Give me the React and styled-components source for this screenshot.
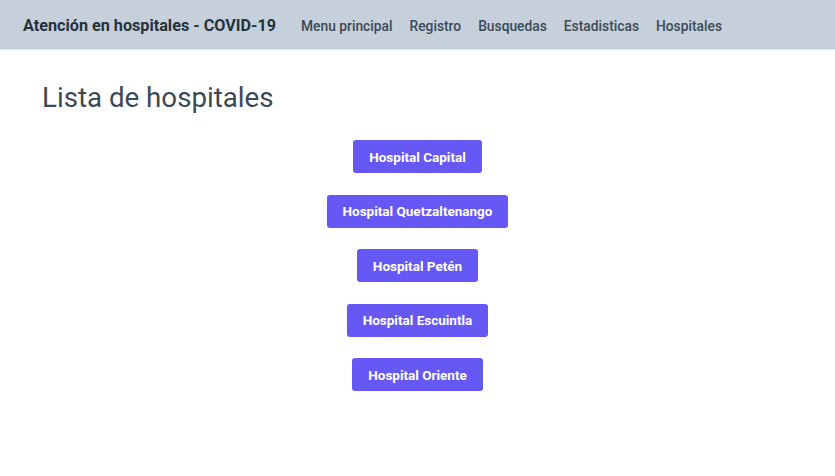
import React from 'react';
import styled, { createGlobalStyle } from 'styled-components';

const GlobalStyle = createGlobalStyle`
  body {
    margin: 0;
    background: #ffffff;
    font-family: Roboto, "Liberation Sans", sans-serif;
  }
`;

const hospitales = [
  'Hospital Capital',
  'Hospital Quetzaltenango',
  'Hospital Petén',
  'Hospital Escuintla',
  'Hospital Oriente',
];

const links = ['Menu principal', 'Registro', 'Busquedas', 'Estadisticas', 'Hospitales'];

const Navbar = styled.nav`
  height: 50px;
  background: #c5d0da;
  border-bottom: 1px solid #e6eaee;
  display: flex;
  align-items: center;
  padding: 2px 23px 0;
  box-sizing: border-box;
`;

const Brand = styled.span`
  font-size: 16.2px;
  font-weight: 700;
  color: #25313d;
  margin-right: 25px;
`;

const NavLinks = styled.div`
  display: flex;
  gap: 17px;
`;

const NavLink = styled.a`
  font-size: 13.8px;
  font-weight: 500;
  color: #3d4a57;
  text-decoration: none;
  cursor: pointer;
`;

const Content = styled.main`
  padding: 31px 42px;
`;

const Title = styled.h1`
  margin: 0 0 26px;
  font-size: 27.7px;
  font-weight: 400;
  color: #3b4957;
`;

const List = styled.div`
  display: flex;
  flex-direction: column;
  align-items: center;
  gap: 21.5px;
`;

const HospitalButton = styled.button`
  height: 33px;
  padding: 0 16px;
  border: none;
  border-radius: 3px;
  background: #6558f5;
  color: #ffffff;
  font-family: Roboto, "Liberation Sans", sans-serif;
  font-size: 13.5px;
  font-weight: 700;
  cursor: pointer;
`;

const App = () => {
  return (
    <>
      <GlobalStyle />
      <Navbar>
        <Brand>Atención en hospitales - COVID-19</Brand>
        <NavLinks>
          {links.map((l) => (
            <NavLink key={l}>{l}</NavLink>
          ))}
        </NavLinks>
      </Navbar>
      <Content>
        <Title>Lista de hospitales</Title>
        <List>
          {hospitales.map((h) => (
            <HospitalButton key={h}>{h}</HospitalButton>
          ))}
        </List>
      </Content>
    </>
  );
};

export default App;
